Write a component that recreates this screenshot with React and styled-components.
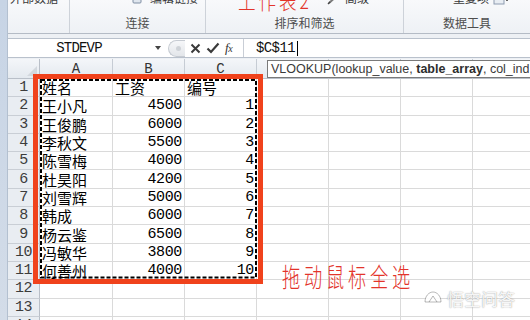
import React from 'react';
import styled, { createGlobalStyle } from 'styled-components';

const Global = createGlobalStyle`
  html, body { margin: 0; padding: 0; width: 530px; height: 320px; overflow: hidden; background: #fff; }
  #root { width: 530px; height: 320px; }
  * { box-sizing: border-box; }
`;

const Screen = styled.div`
  width: 530px; height: 320px; overflow: hidden;
  display: flex; background: #fff;
`;

const SideStrip = styled.div`
  width: 8px; flex: none;
  background: linear-gradient(#c7d4e5, #d3dce8);
  border-right: 1px solid #b3c0d0;
`;

const Main = styled.div`
  flex: 1; min-width: 0; overflow: hidden;
  display: flex; flex-direction: column;
  background: #edf0f4;
`;

const Ribbon = styled.div`
  position: relative;
  height: 34px; flex: none;
  display: flex;
  background: linear-gradient(#f8f9fb, #eef1f5);
  border-bottom: 1px solid #b4bbc5;
  overflow: hidden;
`;

const Group = styled.div`
  width: ${p => p.$w}px; flex: none;
  display: flex; flex-direction: column;
  border-right: 1px solid #cdd2d9;
  padding-bottom: 3px;
`;

const TopRow = styled.div`
  display: flex; align-items: flex-end; gap: 3px;
  height: 14px; margin-top: -9px;
  padding-left: ${p => p.$pl}px;
  font: 12px/14px "Noto Sans CJK SC", sans-serif; color: #3a3a3a;
  white-space: nowrap;
`;

const GroupLabel = styled.div`
  margin-top: auto; text-align: center;
  font: 12px/14px "Noto Sans CJK SC", sans-serif; color: #4d4d4d;
`;

const HandNote = styled.div`
  position: absolute;
  left: ${p => p.$x}px; top: ${p => p.$y}px;
  font-family: "Noto Sans CJK SC", sans-serif;
  font-weight: 300;
  font-size: ${p => p.$size}px; line-height: 1;
  letter-spacing: ${p => p.$ls}px;
  color: #e3342b;
  white-space: nowrap;
  transform: scaleX(${p => p.$sx});
  transform-origin: left top;
`;

const FormulaBar = styled.div`
  height: 20px; flex: none;
  margin-top: 4px; margin-bottom: 1px;
  display: flex; align-items: stretch;
  background: #fff;
  border-top: 1px solid #b9c1cc; border-bottom: 1px solid #b9c1cc;
`;

const NameBox = styled.div`
  width: 157px; flex: none;
  display: flex; align-items: center;
`;

const NameText = styled.div`
  flex: 1; text-align: center;
  font: 14px/18px "Liberation Mono", monospace; letter-spacing: -0.8px;
  color: #111;
`;

const DropArrow = styled.div`
  width: 15px; flex: none; display: flex; justify-content: center;
  &::before {
    content: ""; border-left: 3.5px solid transparent; border-right: 3.5px solid transparent;
    border-top: 4px solid #444;
  }
`;

const Tools = styled.div`
  width: 79px; flex: none;
  display: flex; align-items: center;
  border-right: 1px solid #c9ced6;
`;

const Bulge = styled.div`
  width: 17px; height: 17px; margin-left: 3px; flex: none;
  border: 1px solid #c6cbd2; border-right: none;
  border-radius: 9px 0 0 9px;
  background: linear-gradient(#f6f7f9, #e3e6ea);
  display: flex; align-items: center; justify-content: center;
  &::before {
    content: ""; width: 5px; height: 5px; border-radius: 50%;
    background: #cfd3d8; margin-left: 3px;
  }
`;

const ToolIcon = styled.svg`
  margin-left: ${p => p.$ml}px; flex: none; display: block;
`;

const Fx = styled.span`
  margin-left: 5px;
  font: italic 13px/16px "Liberation Serif", serif; color: #333;
  letter-spacing: -0.5px;
`;

const FxSub = styled.span`
  font-size: 10px;
`;

const InputArea = styled.div`
  flex: 1; display: flex; align-items: center;
  padding-left: 12px;
  font: 14px/18px "Liberation Mono", monospace; letter-spacing: -0.6px;
  color: #111;
`;

const Caret = styled.span`
  width: 1px; height: 15px; background: #000; margin-left: 2px;
`;

const Sheet = styled.div`
  position: relative;
  flex: 1;
  display: grid;
  grid-template-columns: 32px 73px repeat(6, 72px);
  grid-template-rows: 20px repeat(14, 18.3px);
  background: #fff;
`;

const Corner = styled.div`
  background: linear-gradient(#f4f6f9, #e4e9ef);
  border-right: 1px solid #b9bfc8; border-bottom: 1px solid #b9bfc8;
  position: relative;
  &::after {
    content: ""; position: absolute; right: 2px; bottom: 2px;
    border-left: 10px solid transparent; border-bottom: 10px solid #d3d8de;
  }
`;

const ColHead = styled.div`
  background: linear-gradient(#f4f6f9, #e4e9ef);
  border-right: 1px solid #c6ccd4; border-bottom: 1px solid #b9bfc8;
  display: flex; align-items: center; justify-content: center;
  font: 14px/1 "Liberation Mono", monospace; color: #333;
`;

const RowHead = styled.div`
  background: #e9edf2;
  border-right: 1px solid #b9bfc8; border-bottom: 1px solid #c9ced5;
  display: flex; align-items: center; justify-content: center;
  font: 15px/1 "Liberation Mono", monospace; letter-spacing: -0.6px; color: #3c3c3c;
`;

const Cell = styled.div`
  border-right: 1px solid #dadada; border-bottom: 1px solid #dadada;
  display: flex; align-items: center;
  justify-content: ${p => (p.$num ? 'flex-end' : 'flex-start')};
  padding: 0 2px;
  white-space: nowrap; overflow: hidden;
  font: ${p => (p.$num ? '15px/1 "Liberation Mono", monospace' : '15px/1 "Noto Sans CJK SC", sans-serif')};
  letter-spacing: ${p => (p.$num ? '-0.35px' : '0')};
  color: #000;
`;

const RedBox = styled.div`
  position: absolute; left: 25px; top: 15px; width: 230px; height: 210px;
  border: 5px solid #f0421c;
  pointer-events: none;
`;

const Marquee = styled.svg`
  position: absolute; left: 32px; top: 20px;
  overflow: visible; pointer-events: none;
`;

const Tooltip = styled.div`
  position: absolute; left: 259px; top: 1px; right: -30px; height: 18px;
  background: #fff; border: 1px solid #7a7a7a;
  padding-left: 3px;
  font: 12.5px/16px "Liberation Sans", sans-serif; color: #3a3a3a;
  white-space: nowrap; overflow: hidden;
`;

const Strong = styled.b`
  font-weight: 700; color: #2e2e2e;
`;

const Watermark = styled.div`
  position: absolute; left: 415px; top: 231px;
  display: flex; align-items: center; gap: 4px;
  font: 17px/1 "Noto Sans CJK SC", sans-serif;
  color: rgba(255, 255, 255, 0.92);
  text-shadow: 0 0 1px rgba(0, 0, 0, 0.35), 0 0 2px rgba(0, 0, 0, 0.15);
  pointer-events: none;
`;

const rows = [
  ['姓名', '工资', '编号', true],
  ['王小凡', '4500', '1'],
  ['王俊鹏', '6000', '2'],
  ['李秋文', '5500', '3'],
  ['陈雪梅', '4000', '4'],
  ['杜昊阳', '4200', '5'],
  ['刘雪辉', '5000', '6'],
  ['韩成', '6000', '7'],
  ['杨云鉴', '6500', '8'],
  ['冯敏华', '3800', '9'],
  ['何善州', '4000', '10'],
];

// D–G headers sit under the function tooltip, so they show no letter
const cols = ['A', 'B', 'C', '', '', '', ''];

export default function App() {
  const body = [];
  for (let r = 0; r < 14; r++) {
    const d = rows[r];
    body.push(<RowHead key={`h${r}`}>{r + 1}</RowHead>);
    for (let c = 0; c < 7; c++) {
      let content = '';
      let num = false;
      if (d && c < 3) {
        content = d[c];
        num = !d[3] && c > 0;
      }
      body.push(
        <Cell key={`c${r}-${c}`} $num={num}>
          {content}
        </Cell>
      );
    }
  }

  return (
    <>
      <Global />
      <Screen>
        <SideStrip />
        <Main>
          <Ribbon>
            <Group $w={62}>
              <TopRow $pl={2}>外部数据</TopRow>
            </Group>
            <Group $w={136}>
              <TopRow $pl={62}>
                <svg width="15" height="12" viewBox="0 0 15 12">
                  <rect x="1" y="2" width="8" height="8" rx="1" fill="#dfe6ee" stroke="#7f8ea3" />
                  <path d="M8 6h6" stroke="#6d7b8f" strokeWidth="1.5" />
                </svg>
                编辑链接
              </TopRow>
              <GroupLabel>连接</GroupLabel>
            </Group>
            <Group $w={198}>
              <TopRow $pl={121}>
                <svg width="15" height="12" viewBox="0 0 15 12">
                  <path d="M2 10 L11 2" stroke="#7a7a7a" strokeWidth="2" />
                  <path d="M1 11 L3 9" stroke="#444" strokeWidth="1.5" />
                </svg>
                高级
              </TopRow>
              <GroupLabel>排序和筛选</GroupLabel>
            </Group>
            <Group $w={127}>
              <TopRow $pl={49}>
                重复项
                <svg width="18" height="12" viewBox="0 0 18 12">
                  <rect x="2" y="3" width="10" height="8" fill="#e8edf3" stroke="#8e9bb0" />
                  <path d="M13 6l2 2 2-2" stroke="#666" fill="none" />
                </svg>
              </TopRow>
              <GroupLabel>数据工具</GroupLabel>
            </Group>
            <HandNote $x={230} $y={-12} $size={22} $ls={3.6} $sx={0.8}>
              工作表2
            </HandNote>
          </Ribbon>

          <FormulaBar>
            <NameBox>
              <NameText>STDEVP</NameText>
              <DropArrow />
            </NameBox>
            <Tools>
              <Bulge />
              <ToolIcon $ml={5} width="11" height="11" viewBox="0 0 11 11">
                <path d="M1.5 1.5 L9.5 9.5 M9.5 1.5 L1.5 9.5" stroke="#3a3a3a" strokeWidth="2" />
              </ToolIcon>
              <ToolIcon $ml={5} width="14" height="12" viewBox="0 0 14 12">
                <path d="M1.5 6.5 L5 10 L12.5 1.5" stroke="#3a3a3a" strokeWidth="2.2" fill="none" />
              </ToolIcon>
              <Fx>
                f<FxSub>x</FxSub>
              </Fx>
            </Tools>
            <InputArea>
              $C$11
              <Caret />
            </InputArea>
          </FormulaBar>

          <Sheet>
            <Corner />
            {cols.map((c, i) => (
              <ColHead key={i}>{c}</ColHead>
            ))}
            {body}

            <RedBox />
            <Marquee width="218" height="200" viewBox="0 0 218 200">
              <rect
                x="1"
                y="1"
                width="215"
                height="197.5"
                fill="none"
                stroke="#000"
                strokeWidth="2"
                strokeDasharray="4 2"
              />
            </Marquee>
            <Tooltip>
              VLOOKUP(lookup_value, <Strong>table_array</Strong>, col_ind
            </Tooltip>
            <HandNote $x={274} $y={204} $size={26} $ls={5.4} $sx={0.7}>
              拖动鼠标全选
            </HandNote>
            <Watermark>
              <svg width="20" height="17" viewBox="0 0 20 17">
                <path
                  d="M2 12 C2 6 6 2 10 2 C14 2 18 6 18 12 Z M6 12 L10 6 L14 12"
                  fill="rgba(255,255,255,0.9)"
                  stroke="rgba(0,0,0,0.28)"
                  strokeWidth="1"
                />
              </svg>
              悟空问答
            </Watermark>
          </Sheet>
        </Main>
      </Screen>
    </>
  );
}
